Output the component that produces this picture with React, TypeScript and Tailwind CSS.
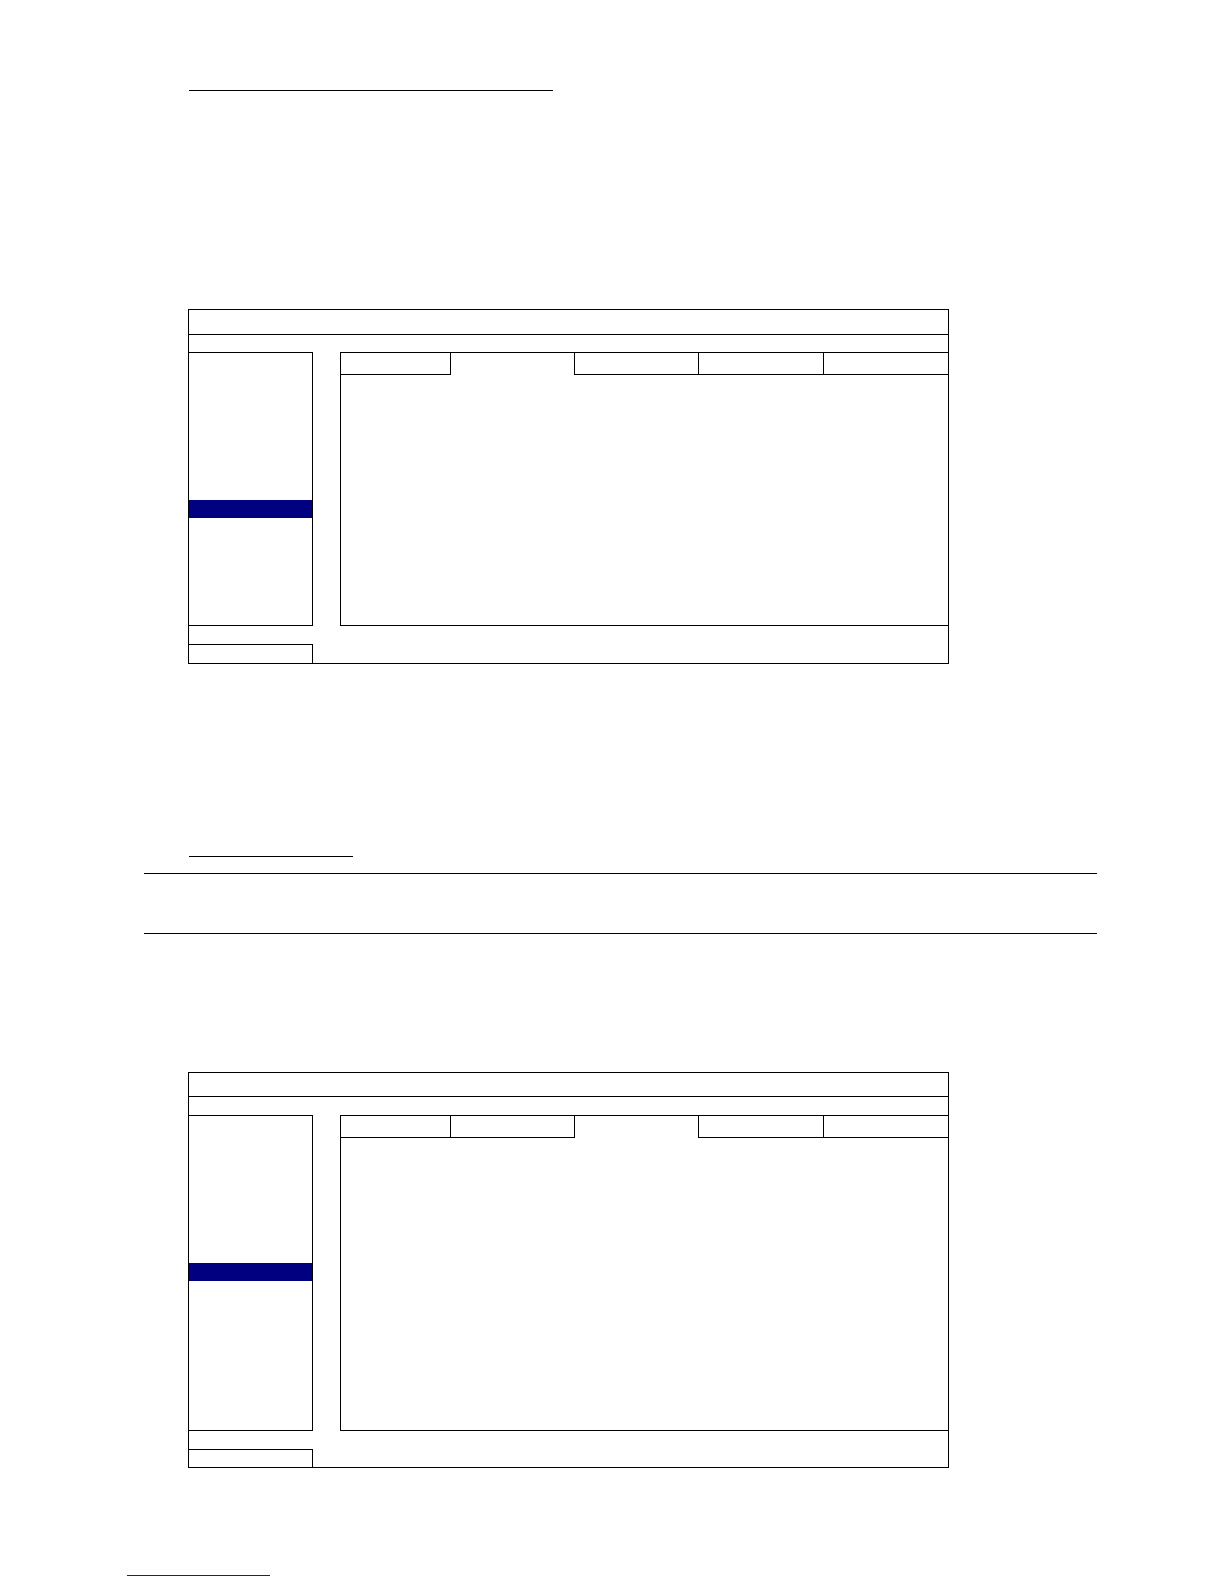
import React from 'react';

type PanelProps = {
  activeTab: number;
  titleH: string;
  gapH: string;
  mainH: string;
  bodyH: string;
  footGapH: string;
  footH: string;
};

const tabWidths = ['w-[111px] border-l', 'w-[124px]', 'w-[124px]', 'w-[125px]', 'w-[124px]'];

function SetupPanel({ activeTab, titleH, gapH, mainH, bodyH, footGapH, footH }: PanelProps) {
  return (
    <div className="ml-[188px] w-[761px] border border-black bg-white flex flex-col">
      {/* title bar */}
      <div className={`${titleH} border-b border-black`} />
      <div className={gapH} />

      {/* menu + tabbed content */}
      <div className={`${mainH} flex`}>
        <div className="w-[124px] h-full border-t border-r border-b border-black flex flex-col">
          <div className="h-[147px]" />
          <div className="h-[18px] bg-[#000080]" />
        </div>
        <div className="ml-[27px] flex-1 flex flex-col">
          <div className="h-[23px] flex">
            {tabWidths.map((w, i) => (
              <div
                key={i}
                className={`${w} h-full border-t border-black ${i < 4 ? 'border-r' : ''} ${
                  i === activeTab ? '' : 'border-b'
                }`}
              />
            ))}
          </div>
          <div className={`${bodyH} border-l border-b border-black`} />
        </div>
      </div>

      <div className={footGapH} />
      <div className={`${footH} w-[124px] border-t border-r border-black`} />
    </div>
  );
}

export default function App() {
  return (
    <div className="w-[1224px] h-[1584px] bg-white flex flex-col" style={{ fontFamily: '"Liberation Sans", Arial, sans-serif' }}>
      <div className="mt-[90px] ml-[189px] w-[364px] h-px bg-black" />

      <div className="mt-[218px]">
        <SetupPanel
          activeTab={1}
          titleH="h-[25px]"
          gapH="h-[17px]"
          mainH="h-[274px]"
          bodyH="h-[251px]"
          footGapH="h-[18px]"
          footH="h-[19px]"
        />
      </div>

      <div className="mt-[192px] ml-[189px] w-[164px] h-px bg-black" />
      <div className="mt-[16px] ml-[144px] w-[953px] h-px bg-black" />
      <div className="mt-[59px] ml-[144px] w-[953px] h-px bg-black" />

      <div className="mt-[138px]">
        <SetupPanel
          activeTab={2}
          titleH="h-[24px]"
          gapH="h-[18px]"
          mainH="h-[316px]"
          bodyH="h-[293px]"
          footGapH="h-[18px]"
          footH="h-[18px]"
        />
      </div>

      <div className="mt-[107px] ml-[127px] w-[143px] h-px bg-[#1a1a8a]" />
    </div>
  );
}
